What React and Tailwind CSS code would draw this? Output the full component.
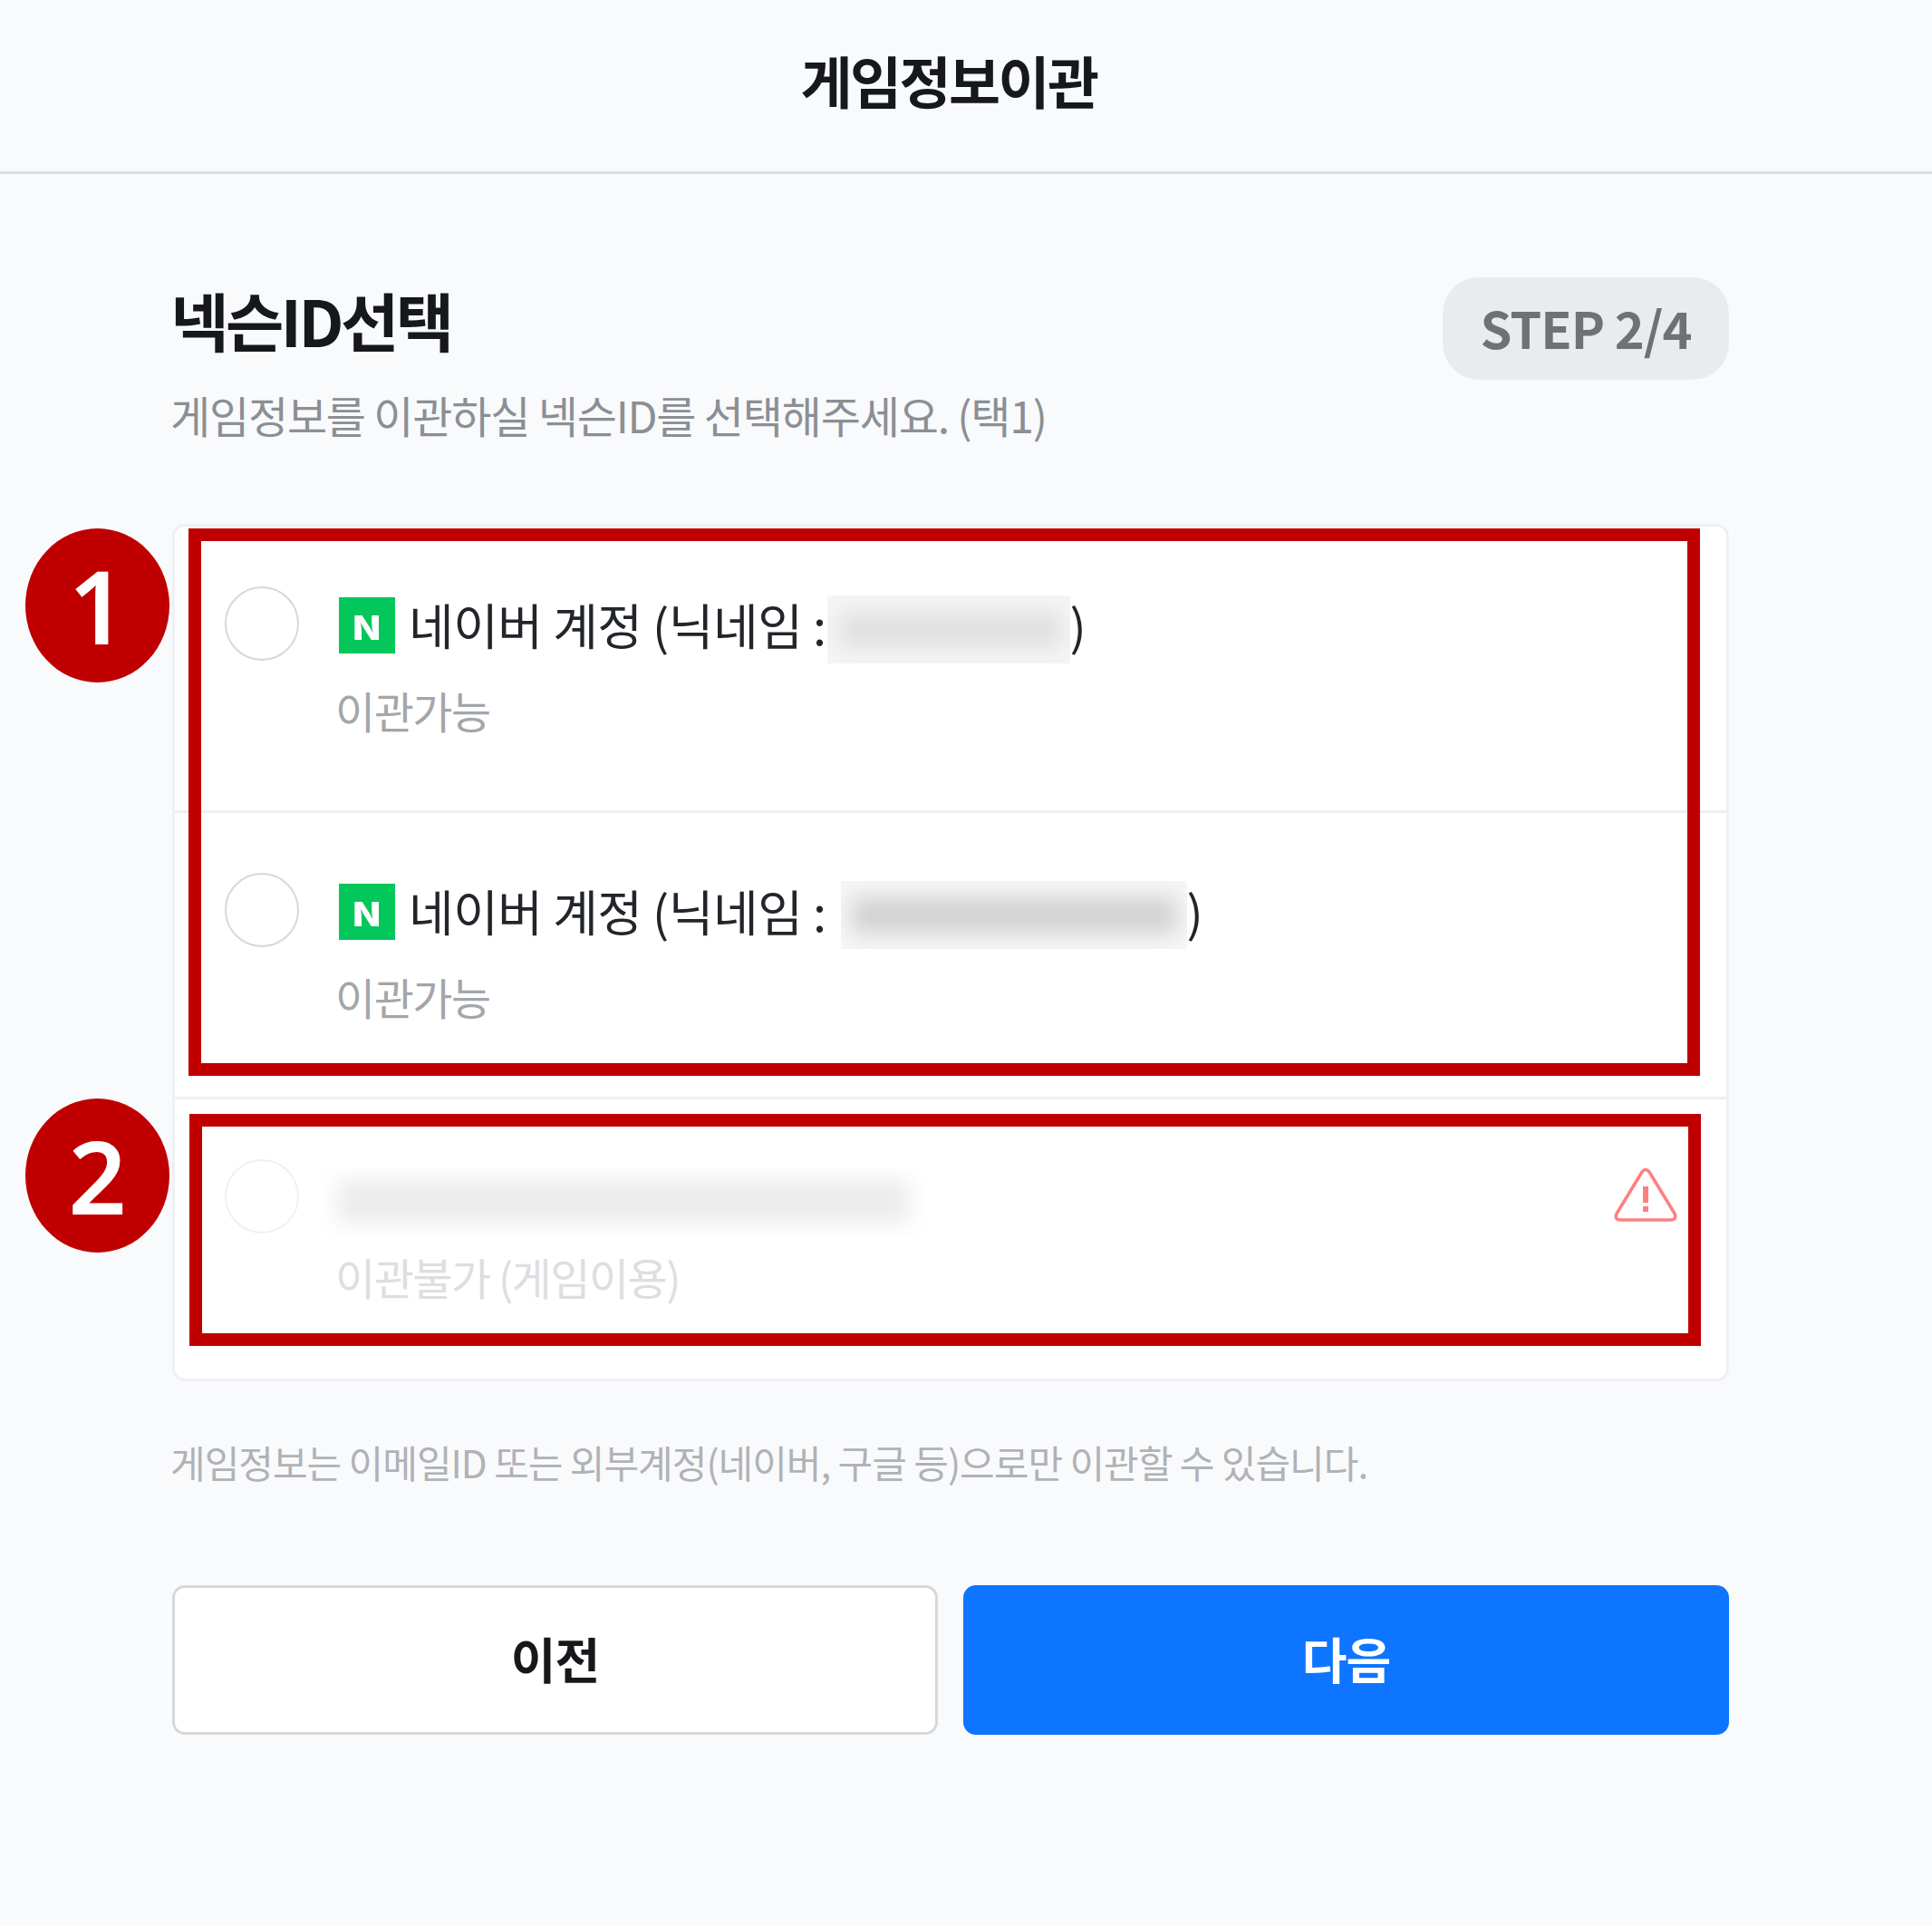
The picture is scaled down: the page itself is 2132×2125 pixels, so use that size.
const font = { fontFamily: '"Noto Sans CJK KR", "Noto Sans", sans-serif' };

const NaverIcon = () => (
  <span className="flex h-[62px] w-[62px] shrink-0 items-center justify-center bg-[#03c75a]">
    <span className="scale-x-125 text-[36px] leading-none font-black text-white">N</span>
  </span>
);

const Radio = ({ faded }) => (
  <span className={`mr-[45px] block h-[82px] w-[82px] shrink-0 rounded-full border-2 bg-white ${faded ? 'border-[#f1f1f1]' : 'border-[#d8d8d8]'}`} />
);

const Masked = ({ className, barClassName }) => (
  <span className={`relative inline-block shrink-0 overflow-hidden ${className}`}>
    <span className={`absolute blur-[11px] ${barClassName}`} />
  </span>
);

const NaverRow = ({ maskClassName, barClassName }) => (
  <div className="flex h-[316px] border-b-[3px] border-[#eef0f3] pt-[66px] pl-[55px]">
    <Radio />
    <div>
      <div className="flex h-[88px] items-center text-[54px] tracking-[-0.5px] text-[#222529]">
        <span className="-mt-[2px] -ml-[1px]">
          <NaverIcon />
        </span>
        <span className="-mt-[5px] ml-[15px] whitespace-nowrap">네이버 계정 (닉네임 :</span>
        <Masked className={maskClassName} barClassName={barClassName} />
        <span className="-mt-[5px]">)</span>
      </div>
      <p className="-mt-[3px] -ml-[5px] text-[48px] leading-[102px] tracking-[-1.5px] text-[#a3a6aa]">이관가능</p>
    </div>
  </div>
);

const Badge = ({ n, className }) => (
  <div className={`absolute left-[28px] flex h-[170px] w-[159px] items-center justify-center rounded-[50%] bg-[#c00000] pb-[1px] font-['Noto_Sans'] text-[112px] leading-none font-semibold text-white ${className}`}>
    {n}
  </div>
);

export default function App() {
  return (
    <div className="relative h-[2125px] w-[2132px] overflow-hidden bg-[#f9fafc]" style={font}>
      <header className="flex h-[192px] items-center justify-center border-b-[3px] border-[#dcdfe2] pr-[38px] pb-[12px]">
        <h1 className="text-[62px] font-bold tracking-[-2.5px] text-[#16181b]">게임정보이관</h1>
      </header>

      <main className="pt-[114px] pr-[224px] pl-[190px]">
        <div className="flex items-start justify-between">
          <div className="-ml-[2px]">
            <h2 className="pt-[4px] text-[70px] leading-[86px] font-bold tracking-[-3.5px] text-[#16181b]">넥슨ID선택</h2>
            <p className="mt-[31px] text-[48px] leading-[60px] tracking-[-1.2px] text-[#8b8f94]">
              게임정보를 이관하실 넥슨ID를 선택해주세요. (택1)
            </p>
          </div>
          <div className="flex h-[113px] w-[316px] items-center justify-center rounded-[40px] bg-[#e9ecef] pb-[4px] text-[56px] font-bold tracking-[-1px] text-[#6e7277]">
            STEP 2/4
          </div>
        </div>

        <section className="mt-[91px] h-[946px] rounded-[14px] border-[3px] border-[#eef0f3] bg-white">
          <NaverRow maskClassName="mt-[6px] ml-[1px] h-[75px] w-[268px] bg-[#f5f5f5]" barClassName="top-[18px] left-[14px] h-[40px] w-[244px] bg-[#e0e0e0]" />
          <NaverRow maskClassName="mt-[5px] ml-[16px] h-[75px] w-[382px] bg-[#f6f6f6]" barClassName="top-[18px] left-[12px] h-[40px] w-[358px] bg-[#d2d2d2]" />
          <div className="flex pt-[66px] pr-[54px] pl-[55px]">
            <Radio faded />
            <div className="flex-1">
              <div className="flex h-[88px] items-center">
                <Masked className="mt-[6px] -ml-[21px] h-[76px] w-[668px] bg-white" barClassName="top-[14px] left-[18px] h-[48px] w-[632px] bg-[#ececec]" />
              </div>
              <p className="-mt-[10px] -ml-[5px] text-[48px] leading-[102px] tracking-[-1.5px] text-[#dddee0]">이관불가 (게임이용)</p>
            </div>
            <svg className="mt-[10px] h-[60px] w-[70px] shrink-0" viewBox="0 0 70 60" fill="none" stroke="#ff7f7f" strokeWidth="3.5" strokeLinejoin="round">
              <path d="M31 4 L3 50 Q0 57 8 57 H62 Q70 57 67 50 L39 4 Q35 -1 31 4 Z" />
              <path d="M35 20 V38" strokeWidth="6" />
              <path d="M35 42 V48" strokeWidth="6" />
            </svg>
          </div>
        </section>

        <p className="mt-[63px] -ml-[2px] text-[42px] leading-[52px] tracking-[-1px] text-[#b0b2b6]">
          게임정보는 이메일ID 또는 외부계정(네이버, 구글 등)으로만 이관할 수 있습니다.
        </p>

        <div className="mt-[110px] grid grid-cols-2 gap-[28px]">
          <button className="h-[165px] rounded-[14px] border-[3px] border-[#d6d8da] bg-white pb-[4px] text-[54px] font-bold tracking-[-1px] text-[#16181b]">이전</button>
          <button className="h-[165px] rounded-[14px] bg-[#0d75ff] pb-[4px] text-[54px] font-bold tracking-[-1px] text-white">다음</button>
        </div>
      </main>

      <div className="absolute top-[583px] left-[208px] h-[604px] w-[1668px] border-[14px] border-[#c00000]" />
      <div className="absolute top-[1229px] left-[209px] h-[256px] w-[1668px] border-[14px] border-[#c00000]" />
      <Badge n="1" className="top-[583px]" />
      <Badge n="2" className="top-[1212px]" />
    </div>
  );
}
